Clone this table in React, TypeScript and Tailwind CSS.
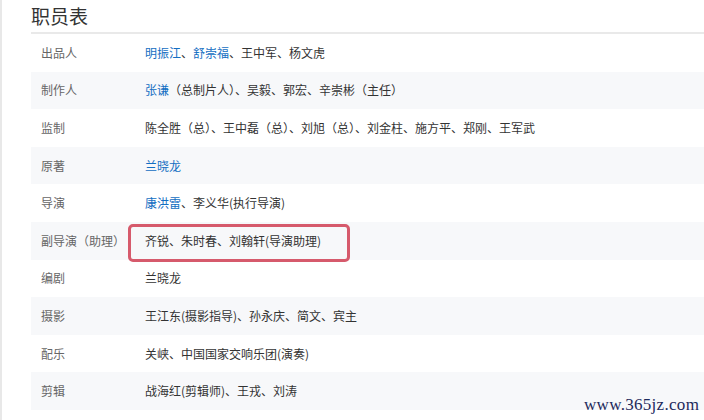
type Part = { text: string; link?: boolean };

const rows: { label: string; value: Part[]; mark?: boolean }[] = [
  { label: '出品人', value: [{ text: '明振江', link: true }, { text: '、' }, { text: '舒崇福', link: true }, { text: '、王中军、杨文虎' }] },
  { label: '制作人', value: [{ text: '张谦', link: true }, { text: '（总制片人）、吴毅、郭宏、辛崇彬（主任）' }] },
  { label: '监制', value: [{ text: '陈全胜（总）、王中磊（总）、刘旭（总）、刘金柱、施方平、郑刚、王军武' }] },
  { label: '原著', value: [{ text: '兰晓龙', link: true }] },
  { label: '导演', value: [{ text: '康洪雷', link: true }, { text: '、李义华(执行导演)' }] },
  { label: '副导演（助理）', value: [{ text: '齐锐、朱时春、刘翰轩(导演助理)' }], mark: true },
  { label: '编剧', value: [{ text: '兰晓龙' }] },
  { label: '摄影', value: [{ text: '王江东(摄影指导)、孙永庆、简文、宾主' }] },
  { label: '配乐', value: [{ text: '关峡、中国国家交响乐团(演奏)' }] },
  { label: '剪辑', value: [{ text: '战海红(剪辑师)、王戎、刘涛' }] },
];

export default function App() {
  return (
    <div
      className="relative w-[704px] h-[420px] overflow-hidden bg-white border-l-2 border-[#e8e8e8]"
      style={{ fontFamily: '"Noto Sans CJK SC", "Liberation Sans", sans-serif' }}
    >
      <div className="pl-[29px]">
        <h2 className="h-[34px] pt-[5px] text-[19px] leading-[22px] text-[#333] font-normal border-b-2 border-[#e9e9e9]">
          职员表
        </h2>
        <div className="flex flex-col">
          {rows.map((r, i) => (
            <div
              key={r.label}
              className={`flex items-center h-[37.6px] text-[12px] ${i % 2 === 1 ? 'bg-[#f7f8fa]' : 'bg-white'}`}
            >
              <div className="w-[114px] pl-[10px] text-[#666]">{r.label}</div>
              <div className="relative text-[#333]">
                {r.value.map((p, j) => (
                  <span key={j} className={p.link ? 'text-[#136ec2]' : ''}>
                    {p.text}
                  </span>
                ))}
                {r.mark && (
                  <div className="absolute left-[-17px] top-[-8px] w-[222px] h-[38px] border-[3px] border-[#d65a6c] rounded-[5px]" />
                )}
              </div>
            </div>
          ))}
        </div>
      </div>
      <div
        className="absolute left-[582px] top-[392px] text-[17px] text-[#1d2a5c] tracking-[0.3px]"
        style={{ fontFamily: '"Liberation Serif", serif' }}
      >
        www.365jz.com
      </div>
    </div>
  );
}
